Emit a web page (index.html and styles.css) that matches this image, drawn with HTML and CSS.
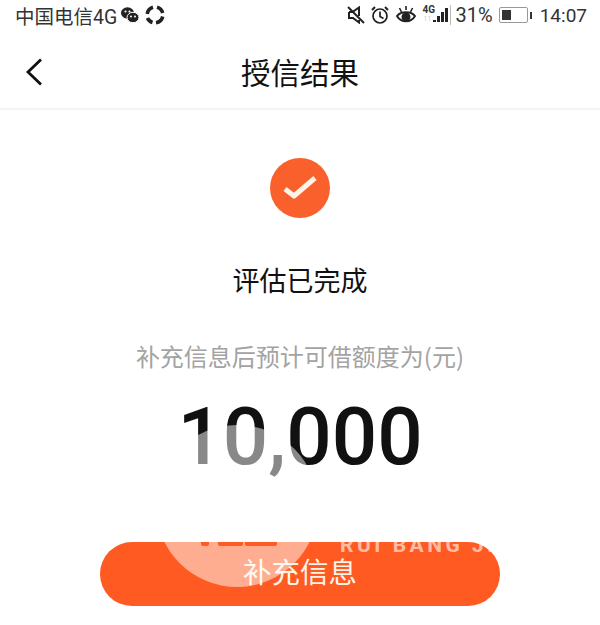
FILE: index.html
```html
<!DOCTYPE html>
<html lang="zh-CN">
<head>
    <meta charset="UTF-8">
    <meta name="viewport" content="width=device-width, initial-scale=1.0">
    <title>授信结果</title>
    <link rel="stylesheet" href="styles.css">
</head>
<body>
    <div class="page">
        <div class="status-bar">
            <div class="status-left">
                <span>中国电信4G</span>
                <svg class="ic-chat" width="18" height="16" viewBox="0 0 18 16">
                    <ellipse cx="6.500" cy="6" rx="6.500" ry="5.800" fill="#222"/>
                    <ellipse cx="12" cy="10.500" rx="6" ry="5.200" fill="#222" stroke="#fff" stroke-width="1"/>
                    <circle cx="4.500" cy="4.500" r="1.100" fill="#fff"/>
                    <circle cx="8.500" cy="4.500" r="1.100" fill="#fff"/>
                    <circle cx="10" cy="9.500" r="1" fill="#fff"/>
                    <circle cx="14" cy="9.500" r="1" fill="#fff"/>
                </svg>
                <svg class="ic-ring" width="20" height="20" viewBox="0 0 20 20" fill="none" stroke="#222" stroke-width="3.600">
                    <path d="M2.300 9 A8 8 0 0 1 8 2.300"/>
                    <path d="M12 2.300 A8 8 0 0 1 17.700 8"/>
                    <path d="M17.700 11.500 A8 8 0 0 1 11 17.700"/>
                    <path d="M7.500 17.500 A8 8 0 0 1 2.500 13"/>
                </svg>
            </div>
            <div class="status-right">
                <svg class="ic-mute" width="18" height="18" viewBox="0 0 18 18" fill="none" stroke="#222" stroke-width="2">
                    <path d="M2 6 H5.500 L12 1.500 V10"/>
                    <path d="M2 6 V12 H6 L12 16.500 V14"/>
                    <path d="M1 1 L17 17"/>
                </svg>
                <svg class="ic-alarm" width="18" height="18" viewBox="0 0 18 18" fill="none" stroke="#222" stroke-width="1.700">
                    <circle cx="9" cy="10" r="7"/>
                    <path d="M9 5.500 V10.500 L12.500 12.500"/>
                    <path d="M1 4 L4 1 M14 1 L17 4" stroke-width="2"/>
                </svg>
                <svg class="ic-eye" width="20" height="18" viewBox="0 0 20 18" fill="none" stroke="#222" stroke-width="2">
                    <path d="M1 10 C5 5 15 5 19 10 C15 17 5 17 1 10 Z"/>
                    <circle cx="10" cy="11" r="3.500" fill="#222"/>
                    <path d="M3.500 2 L5.500 6 M10 0 V4 M16.500 2 L14.500 6" stroke-width="1.600"/>
                </svg>
                <div class="signal">
                    <span class="net">4G</span>
                    <span class="net-low">11</span>
                    <span class="bar b1"></span>
                    <span class="bar b2"></span>
                    <span class="bar b3"></span>
                    <span class="bar b4"></span>
                </div>
                <span class="pct">31%</span>
                <div class="battery">
                    <div class="battery-body"><div class="battery-fill"></div></div>
                    <div class="battery-tip"></div>
                </div>
                <span class="clock">14:07</span>
            </div>
        </div>

        <div class="nav">
            <svg class="back" width="18" height="28" viewBox="0 0 18 28" fill="none" stroke="#111" stroke-width="2.800">
                <path d="M16 1.500 L3 14 L16 26.500"/>
            </svg>
            <h1>授信结果</h1>
        </div>

        <div class="content">
            <div class="check">
                <svg width="36" height="28" viewBox="0 0 36 28" fill="none" stroke="#fff2e6" stroke-width="5" stroke-linejoin="round">
                    <path d="M3 15 L12 22 L33 4"/>
                </svg>
            </div>
            <div class="title">评估已完成</div>
            <div class="sub">补充信息后预计可借额度为(元)</div>
            <div class="amount">10,000</div>
            <button class="btn">补充信息</button>
        </div>

        <div class="watermark">
            <div class="wm-circle"></div>
            <div class="wm-cuts"><span></span><span></span><span></span></div>
            <div class="wm-text">RUI BANG JI</div>
        </div>
    </div>
</body>
</html>
```

FILE: styles.css
```css
* {
    box-sizing: border-box;
}
html, body {
    margin: 0;
    padding: 0;
    background: #fff;
}
.page {
    position: relative;
    width: 600px;
    height: 625px;
    overflow: hidden;
    font-family: "Noto Sans CJK SC", Roboto, sans-serif;
    color: #111;
}
.status-bar {
    height: 30px;
    display: flex;
    justify-content: space-between;
    align-items: center;
    padding: 0 13px 0 15px;
    font-family: Roboto, "Noto Sans CJK SC", sans-serif;
    font-size: 19.500px;
    color: #333;
}
.status-left {
    display: flex;
    align-items: center;
    gap: 4px;
}
.ic-ring {
    margin-left: 2px;
}
.status-right {
    display: flex;
    align-items: center;
}
.ic-alarm {
    margin-left: 6px;
}
.ic-eye {
    margin-left: 7px;
}
.signal {
    position: relative;
    width: 28px;
    height: 20px;
    margin-left: 7px;
    border-right: 1px solid #bbb;
}
.net {
    position: absolute;
    left: 0;
    top: 0;
    font-size: 10px;
    line-height: 10px;
    font-weight: 700;
}
.net-low {
    position: absolute;
    left: 1px;
    top: 11px;
    font-size: 7px;
    line-height: 7px;
    color: #ccc;
}
.bar {
    position: absolute;
    bottom: 3px;
    width: 3px;
    background: #222;
}
.b1 { left: 10px; height: 2px; }
.b2 { left: 14px; height: 6px; }
.b3 { left: 18px; height: 10px; }
.b4 { left: 22px; height: 14px; }
.pct {
    margin-left: 5px;
    font-size: 20px;
}
.battery {
    display: flex;
    align-items: center;
    margin-left: 6px;
}
.battery-body {
    width: 29px;
    height: 16px;
    padding: 2px;
    border: 1px solid #999;
    border-radius: 2px;
}
.battery-fill {
    width: 9px;
    height: 100%;
    background: #333;
}
.battery-tip {
    width: 2px;
    height: 7px;
    margin-left: 2px;
    background: #333;
}
.clock {
    margin-left: 8px;
    font-size: 19px;
}
.nav {
    position: relative;
    height: 80px;
    padding-top: 4px;
    border-bottom: 2px solid #f4f4f4;
    display: flex;
    align-items: center;
    justify-content: center;
}
.nav h1 {
    margin: 0;
    font-size: 29.500px;
    font-weight: 400;
}
.back {
    position: absolute;
    left: 25px;
    top: 28px;
}
.content {
    display: flex;
    flex-direction: column;
    align-items: center;
    padding-top: 48px;
}
.check {
    width: 60px;
    height: 60px;
    border-radius: 50%;
    background: #f9602c;
    display: flex;
    align-items: center;
    justify-content: center;
}
.title {
    margin-top: 42px;
    height: 40px;
    line-height: 40px;
    font-size: 27px;
}
.sub {
    margin-top: 36px;
    height: 40px;
    line-height: 40px;
    font-size: 24px;
    color: #a3a3a3;
}
.amount {
    margin-top: 11px;
    height: 100px;
    line-height: 100px;
    margin-bottom: 55px;
    font-family: Roboto, sans-serif;
    font-size: 80px;
    font-weight: 500;
    color: #111;
}
.btn {
    width: 400px;
    height: 64px;
    border: none;
    border-radius: 32px;
    background: #fe5a22;
    color: #fff3e6;
    font-family: "Noto Sans CJK SC", sans-serif;
    font-size: 28.500px;
    padding: 0 0 8px;
}
/* watermark sits over the page, only shows on dark things */
.watermark {
    position: absolute;
    inset: 0;
    pointer-events: none;
}
.wm-circle {
    position: absolute;
    left: 156px;
    top: 425px;
    width: 162px;
    height: 162px;
    border-radius: 50%;
    background: rgba(255, 255, 255, 0.5);
}
/* holes of the logo, button colour shows through */
.wm-cuts {
    position: absolute;
    left: 201px;
    top: 542px;
    display: flex;
}
.wm-cuts span {
    height: 4px;
    background: #fe5a22;
    border-radius: 0 0 2px 2px;
}
.wm-cuts span:nth-child(1) {
    width: 8px;
}
.wm-cuts span:nth-child(2) {
    width: 25px;
    margin-left: 9px;
}
.wm-cuts span:nth-child(3) {
    width: 32px;
    margin-left: 2px;
}
.wm-text {
    position: absolute;
    left: 340px;
    top: 535px;
    font-family: Roboto, sans-serif;
    font-size: 21px;
    line-height: 20px;
    font-weight: 700;
    letter-spacing: 3.500px;
    color: rgba(255, 255, 255, 0.6);
}
```
